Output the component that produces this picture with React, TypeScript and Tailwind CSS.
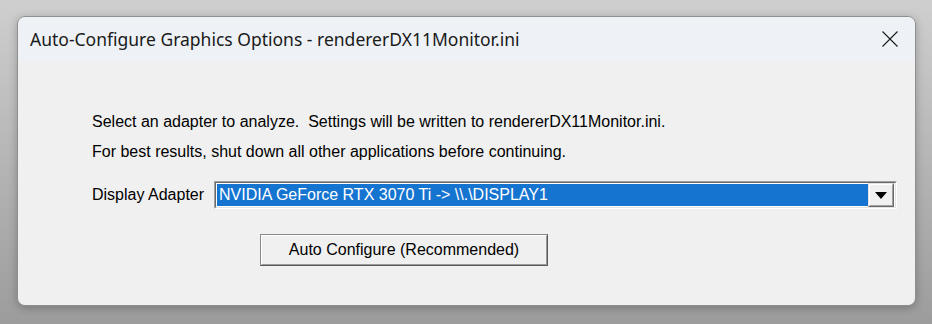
import React from "react";

export default function App() {
  return (
    <div className="w-[932px] h-[324px] bg-gradient-to-b from-[#cfcfcf] to-[#9c9c9c] pt-[16px] pl-[17px] overflow-hidden">
      <div className="w-[899px] h-[290px] rounded-[8px] border border-[#8f8f8f] overflow-hidden flex flex-col shadow-[0_2px_8px_rgba(0,0,0,0.25)]">
        <div className="h-[44px] bg-[#eef2f6] flex items-center justify-between pl-[12px] pr-[17px] shrink-0">
          <span className="text-[17.5px] text-[#1a1a1a] font-['Noto_Sans',sans-serif]">
            Auto-Configure Graphics Options - rendererDX11Monitor.ini
          </span>
          <svg width="16" height="16" viewBox="0 0 16 16" className="mb-[1px]">
            <path d="M0.5 0.5 L15.5 15.5 M15.5 0.5 L0.5 15.5" stroke="#1a1a1a" strokeWidth="1.1" fill="none" />
          </svg>
        </div>
        <div className="flex-1 bg-[#f0f0f0] pl-[74px] pt-[46px] font-['Liberation_Sans',Arial,sans-serif] text-[16px] text-black">
          <div className="leading-[30px]">Select an adapter to analyze.&nbsp; Settings will be written to rendererDX11Monitor.ini.</div>
          <div className="leading-[30px]">For best results, shut down all other applications before continuing.</div>
          <div className="flex items-center mt-[14px]">
            <span className="w-[122px] leading-[20px]">Display Adapter</span>
            <div className="w-[683px] h-[28px] border-t border-l border-[#a0a0a0] border-b border-r border-b-white border-r-white">
              <div className="w-full h-full border-t border-l border-[#696969] border-b border-r border-b-[#e3e3e3] border-r-[#e3e3e3] bg-white flex p-[1px]">
                <div className="flex-1 bg-[#1674d1] text-white leading-[22px] pl-[2px] whitespace-nowrap">
                  NVIDIA GeForce RTX 3070 Ti -&gt; \\.\DISPLAY1
                </div>
                <div className="w-[26px] h-[24px] -mt-[1px] border-t border-l border-[#e3e3e3] border-b border-r border-b-[#696969] border-r-[#696969] bg-[#f0f0f0] flex items-center justify-center">
                  <div className="w-full h-full border-t border-l border-white border-b border-r border-b-[#a0a0a0] border-r-[#a0a0a0] flex items-center justify-center">
                    <svg width="12" height="7" viewBox="0 0 12 7">
                      <path d="M0 0 H12 L6 7 Z" fill="#000" />
                    </svg>
                  </div>
                </div>
              </div>
            </div>
          </div>
          <div className="mt-[25px] ml-[168px] w-[288px] h-[32px] border-t border-l border-[#8a8a8a] border-b border-r border-b-[#5a5a5a] border-r-[#5a5a5a]">
            <div className="w-full h-full border-t border-l border-white border-b border-r border-b-[#9a9a9a] border-r-[#9a9a9a] bg-[#f0f0f0] flex items-center justify-center">
              Auto Configure (Recommended)
            </div>
          </div>
        </div>
      </div>
    </div>
  );
}
